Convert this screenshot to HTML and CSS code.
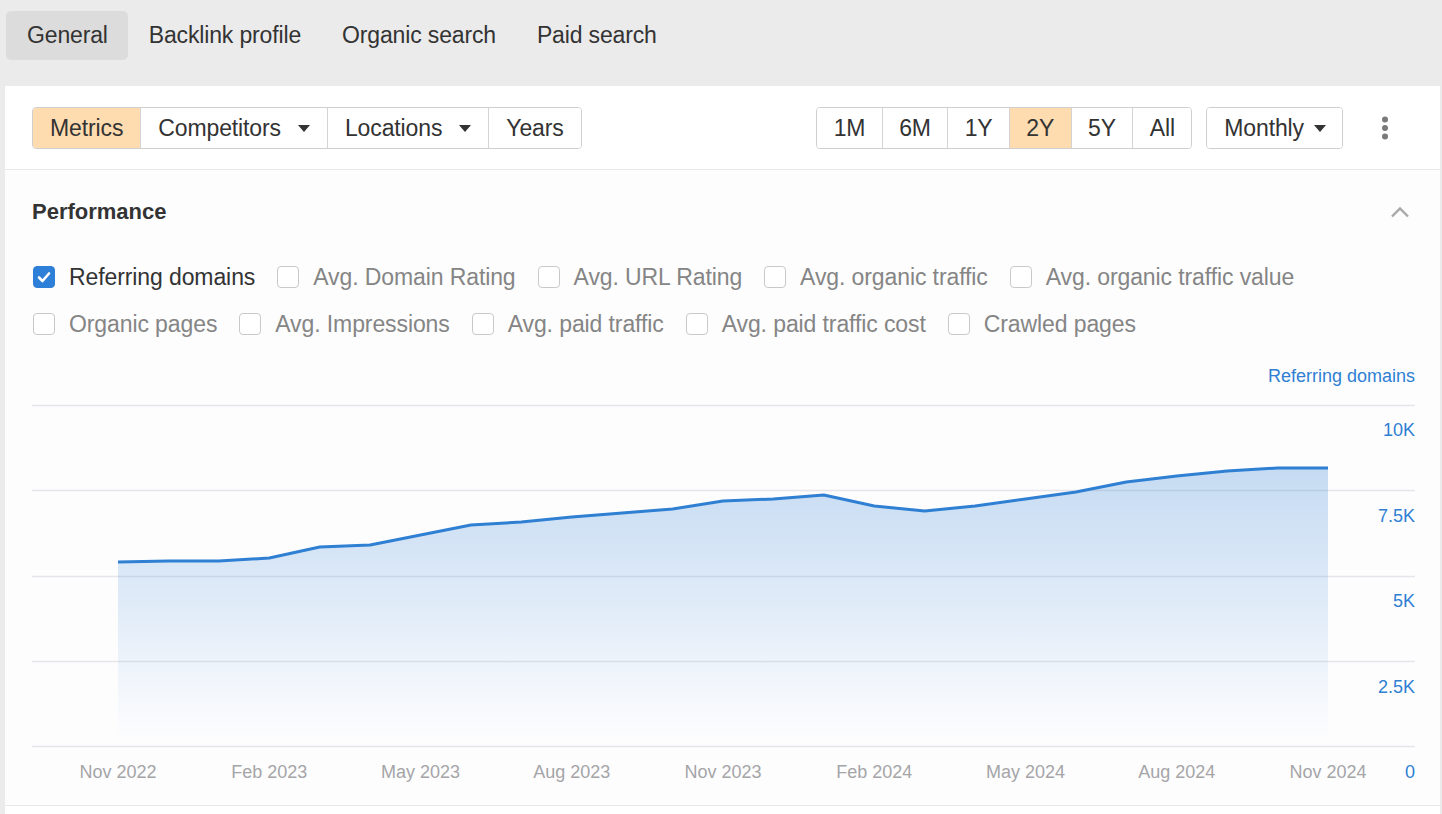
FILE: index.html
```html
<!DOCTYPE html>
<html lang="en">
<head>
<meta charset="utf-8">
<title>Overview</title>
<link rel="stylesheet" href="styles.css">
</head>
<body>
<nav class="tabs">
  <a class="tab tab-active">General</a>
  <a class="tab">Backlink profile</a>
  <a class="tab">Organic search</a>
  <a class="tab">Paid search</a>
</nav>
<main class="panel">
  <div class="toolbar">
    <div class="seg">
      <button class="btn btn-active">Metrics</button>
      <button class="btn">Competitors<span class="caret"></span></button>
      <button class="btn btn-loc">Locations<span class="caret"></span></button>
      <button class="btn">Years</button>
    </div>
    <div class="toolbar-right">
      <div class="seg seg-time">
        <button class="btn">1M</button>
        <button class="btn">6M</button>
        <button class="btn">1Y</button>
        <button class="btn btn-active">2Y</button>
        <button class="btn">5Y</button>
        <button class="btn">All</button>
      </div>
      <div class="seg">
        <button class="btn btn-monthly">Monthly<span class="caret"></span></button>
      </div>
      <div class="kebab">
        <svg width="24" height="26" viewBox="0 0 24 26"><circle cx="12" cy="4.5" r="3" fill="#7a7a7a"/><circle cx="12" cy="13" r="3" fill="#7a7a7a"/><circle cx="12" cy="21.5" r="3" fill="#7a7a7a"/></svg>
      </div>
    </div>
  </div>

  <section class="perf">
    <div class="perf-head">
      <h2 class="perf-title">Performance</h2>
      <svg class="chevron" width="20" height="12" viewBox="0 0 20 12"><path d="M2 10.5 L10 2.5 L18 10.5" fill="none" stroke="#a8a8a8" stroke-width="2.4"/></svg>
    </div>

    <div class="checks">
      <label class="check check-on"><span class="box box-on"><svg width="22" height="22" viewBox="0 0 22 22"><path d="M6 11.5 L9.5 15 L16 7.5" fill="none" stroke="#fff" stroke-width="2.6" stroke-linecap="round" stroke-linejoin="round"/></svg></span>Referring domains</label>
      <label class="check"><span class="box"></span>Avg. Domain Rating</label>
      <label class="check"><span class="box"></span>Avg. URL Rating</label>
      <label class="check"><span class="box"></span>Avg. organic traffic</label>
      <label class="check"><span class="box"></span>Avg. organic traffic value</label>
    </div>
    <div class="checks checks-2">
      <label class="check"><span class="box"></span>Organic pages</label>
      <label class="check"><span class="box"></span>Avg. Impressions</label>
      <label class="check"><span class="box"></span>Avg. paid traffic</label>
      <label class="check"><span class="box"></span>Avg. paid traffic cost</label>
      <label class="check"><span class="box"></span>Crawled pages</label>
    </div>

    <div class="legend">Referring domains</div>

    <svg class="chart" viewBox="0 0 1383 410" width="1383" height="410">
      <defs>
        <linearGradient id="fill" x1="0" y1="73" x2="0" y2="345" gradientUnits="userSpaceOnUse">
          <stop offset="0" stop-color="#2f7fd3" stop-opacity="0.27"/>
          <stop offset="0.5" stop-color="#3a86d6" stop-opacity="0.15"/>
          <stop offset="1" stop-color="#4a90dc" stop-opacity="0.0"/>
        </linearGradient>
      </defs>
      <g class="grid">
        <line x1="0" y1="10.5" x2="1383" y2="10.5"/>
        <line x1="0" y1="95.5" x2="1383" y2="95.5"/>
        <line x1="0" y1="181.5" x2="1383" y2="181.5"/>
        <line x1="0" y1="266.5" x2="1383" y2="266.5"/>
        <line x1="0" y1="351.5" x2="1383" y2="351.5"/>
      </g>
      <path fill="url(#fill)" d="M86 167 L136.4 166 L186.8 166 L237.3 163 L287.7 152 L338.1 150 L388.5 140 L438.9 130 L489.3 127 L539.8 122 L590.2 118 L640.6 114 L691 106 L741.4 104 L791.8 100 L842.3 111 L892.7 116 L943.1 111 L993.5 104 L1043.9 97 L1094.3 87 L1144.8 81 L1195.2 76 L1245.6 73 L1296 73 L1296 351 L86 351 Z"/>
      <path fill="none" stroke="#2f7fd3" stroke-width="3" stroke-linejoin="round" d="M86 167 L136.4 166 L186.8 166 L237.3 163 L287.7 152 L338.1 150 L388.5 140 L438.9 130 L489.3 127 L539.8 122 L590.2 118 L640.6 114 L691 106 L741.4 104 L791.8 100 L842.3 111 L892.7 116 L943.1 111 L993.5 104 L1043.9 97 L1094.3 87 L1144.8 81 L1195.2 76 L1245.6 73 L1296 73"/>
      <g class="ylab">
        <text x="1383" y="41">10K</text>
        <text x="1383" y="127">7.5K</text>
        <text x="1383" y="212">5K</text>
        <text x="1383" y="298">2.5K</text>
        <text x="1383" y="383">0</text>
      </g>
      <g class="xlab">
        <text x="86" y="383">Nov 2022</text>
        <text x="237.3" y="383">Feb 2023</text>
        <text x="388.5" y="383">May 2023</text>
        <text x="539.8" y="383">Aug 2023</text>
        <text x="691" y="383">Nov 2023</text>
        <text x="842.3" y="383">Feb 2024</text>
        <text x="993.5" y="383">May 2024</text>
        <text x="1144.8" y="383">Aug 2024</text>
        <text x="1296" y="383">Nov 2024</text>
      </g>
    </svg>
  </section>
</main>
</body>
</html>
```

FILE: styles.css
```css
* { box-sizing: border-box; }

html, body {
  margin: 0;
  padding: 0;
}

body {
  background: #ebebec;
  font-family: "Liberation Sans", Arial, sans-serif;
  color: #333;
  height: 814px;
  overflow: hidden;
}

.tabs {
  display: flex;
  padding: 11px 0 26px 6px;
}

.tab {
  display: block;
  height: 49px;
  line-height: 49px;
  padding: 0 20px 0 21px;
  font-size: 23px;
  letter-spacing: -0.15px;
  color: #333;
  border-radius: 5px;
}

.tab-active {
  background: #dcdcdd;
}

.panel {
  margin: 0 2px 0 5px;
  background: #fff;
  height: 728px;
}

.toolbar {
  display: flex;
  justify-content: space-between;
  align-items: center;
  padding: 21px 43px 20px 27px;
  border-bottom: 1px solid #e8e8ea;
}

.toolbar-right {
  display: flex;
  align-items: center;
  gap: 14px;
}

.seg {
  display: flex;
  border: 1px solid #cfcfcf;
  border-radius: 4px;
  overflow: hidden;
  background: #fff;
}

.btn {
  display: flex;
  align-items: center;
  height: 40px;
  padding: 0 17px;
  border: 0;
  border-left: 1px solid #d3d3d3;
  background: #fff;
  font-family: inherit;
  font-size: 23px;
  letter-spacing: -0.12px;
  color: #333;
}

.btn:first-child {
  border-left: 0;
}

.seg-time .btn {
  padding: 0 16.4px;
}

.btn-active {
  background: #fedcb0;
}

.btn-monthly {
  padding: 0 16px 0 17px;
}

.caret {
  display: inline-block;
  width: 0;
  height: 0;
  margin-left: 17px;
  border-left: 6px solid transparent;
  border-right: 6px solid transparent;
  border-top: 7px solid #333;
}

.btn-monthly .caret {
  margin-left: 10px;
}

.kebab {
  margin-left: 16px;
  width: 24px;
  height: 26px;
  display: flex;
}

.perf {
  padding: 0 25px 0 27px;
  background: #fdfdfe;
  border-bottom: 1px solid #e8e8ea;
}

.perf-head {
  display: flex;
  justify-content: space-between;
  align-items: center;
  padding-top: 30px;
  height: 53px;
}

.perf-title {
  margin: 0;
  font-size: 22px;
  line-height: 24px;
  font-weight: bold;
  color: #333;
}

.chevron {
  margin-right: 5px;
}

.checks {
  display: flex;
  gap: 21px;
  margin-top: 42px;
  height: 24px;
  align-items: center;
}

.checks-2 {
  margin-top: 23px;
}

.check {
  display: flex;
  align-items: center;
  font-size: 23px;
  letter-spacing: -0.1px;
  color: #858585;
  white-space: nowrap;
}

.check-on {
  color: #333;
}

.box {
  display: block;
  width: 22px;
  height: 22px;
  margin: 0 14px 0 1px;
  border: 1px solid #c9c9c9;
  border-radius: 4px;
  background: #fff;
}

.box-on {
  background: #2e7fd8;
  border-color: #2e7fd8;
}

.box-on svg {
  display: block;
  margin: -1px;
}

.legend {
  margin-top: 30px;
  height: 20px;
  line-height: 20px;
  text-align: right;
  font-size: 18px;
  color: #2f7fd3;
}

.chart {
  display: block;
  margin-top: 9px;
}

.grid line {
  stroke: #e6e6ea;
  stroke-width: 1.5;
}

.ylab text {
  font-family: "Liberation Sans", Arial, sans-serif;
  font-size: 18px;
  fill: #2f7fd3;
  text-anchor: end;
}

.xlab text {
  font-family: "Liberation Sans", Arial, sans-serif;
  font-size: 18px;
  fill: #a5a5a8;
  text-anchor: middle;
}
```
